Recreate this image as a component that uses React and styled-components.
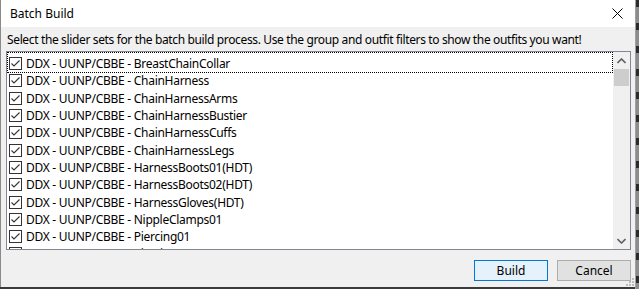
import React from "react";
import styled, { createGlobalStyle } from "styled-components";

const Global = createGlobalStyle`
  html, body {
    margin: 0;
    padding: 0;
    background: #3a3a3a;
  }
  body {
    font-family: "Noto Sans", "Liberation Sans", sans-serif;
    font-size: 12px;
    color: #000;
  }
`;

const items = [
  "BreastChainCollar",
  "ChainHarness",
  "ChainHarnessArms",
  "ChainHarnessBustier",
  "ChainHarnessCuffs",
  "ChainHarnessLegs",
  "HarnessBoots01(HDT)",
  "HarnessBoots02(HDT)",
  "HarnessGloves(HDT)",
  "NippleClamps01",
  "Piercing01",
  "Piercing02",
  "Piercing03",
];

const Screen = styled.div`
  display: flex;
  width: 639px;
  height: 289px;
  overflow: hidden;
`;

const Window = styled.div`
  width: 635px;
  height: 287px;
  display: flex;
  flex-direction: column;
  background: #f0f0f0;
  border-left: 1px solid #8a8a8a;
  box-sizing: border-box;
`;

const Backdrop = styled.div`
  width: 4px;
  height: 289px;
  border-left: 1px solid #a0a0a0;
  background: repeating-linear-gradient(
    to bottom,
    #2c2c2c 0px,
    #2c2c2c 7px,
    #8c8c8c 7px,
    #8c8c8c 23px
  );
`;

const TitleBar = styled.div`
  height: 27px;
  flex: none;
  background: #fff;
  display: flex;
  align-items: center;
  justify-content: space-between;
  padding-left: 9px;
`;

const Title = styled.span`
  font-size: 12px;
`;

const CloseButton = styled.div`
  width: 30px;
  height: 27px;
  display: flex;
  align-items: center;
  justify-content: center;
  margin-right: 3px;
`;

const Body = styled.div`
  flex: 1;
  display: flex;
  flex-direction: column;
  padding: 6px 4px 0 5px;
  position: relative;
`;

const Hint = styled.div`
  height: 14px;
  line-height: 14px;
  padding-left: 1px;
  margin-bottom: 4px;
  white-space: nowrap;
  letter-spacing: -0.36px;
`;

const ListBox = styled.div`
  height: 199px;
  width: 625px;
  box-sizing: border-box;
  border: 1px solid #828790;
  background: #fff;
  display: flex;
`;

const Rows = styled.div`
  flex: 1;
  padding-top: 3px;
  overflow: hidden;
`;

const Row = styled.div`
  height: 17.3px;
  display: flex;
  align-items: center;
  padding-left: 2px;
  position: relative;
  white-space: nowrap;

  &::before {
    content: "";
    display: ${(p) => (p.$focused ? "block" : "none")};
    position: absolute;
    left: 0;
    right: 0;
    top: -3px;
    bottom: -1px;
    border: 1px dotted #000;
  }
`;

const Box = styled.span`
  width: 13px;
  height: 13px;
  box-sizing: border-box;
  border: 1px solid #333;
  background: #fff;
  margin-right: 4px;
  display: flex;
  align-items: center;
  justify-content: center;
  flex: none;
`;

const Label = styled.span`
  letter-spacing: -0.28px;
`;

const ScrollBar = styled.div`
  width: 17px;
  background: #f0f0f0;
  display: flex;
  flex-direction: column;
`;

const Arrow = styled.div`
  height: 17px;
  display: flex;
  align-items: center;
  justify-content: center;
`;

const Track = styled.div`
  flex: 1;
  padding: 0 1px;
`;

const Thumb = styled.div`
  height: 17px;
  background: #cdcdcd;
`;

const Footer = styled.div`
  flex: 1;
  display: flex;
  justify-content: flex-end;
  align-items: flex-start;
  gap: 9px;
  padding-top: 10px;
`;

const Button = styled.div`
  width: 74px;
  height: 21px;
  box-sizing: border-box;
  display: flex;
  align-items: center;
  justify-content: center;
  border: 1px solid ${(p) => (p.$primary ? "#0078d7" : "#adadad")};
  background: ${(p) => (p.$primary ? "#e5f1fb" : "#e1e1e1")};
`;

const Grip = styled.svg`
  position: absolute;
  right: 1px;
  bottom: 1px;
`;

const Check = () => (
  <svg width="11" height="11" viewBox="0 0 11 11">
    <path d="M1.5 5.5 L4 8 L9.5 2.5" fill="none" stroke="#333" strokeWidth="1.1" />
  </svg>
);

export default function App() {
  return (
    <>
      <Global />
      <Screen>
        <Window>
          <TitleBar>
            <Title>Batch Build</Title>
            <CloseButton>
              <svg width="11" height="11" viewBox="0 0 11 11">
                <path d="M0.5 0.5 L10.5 10.5 M10.5 0.5 L0.5 10.5" stroke="#000" strokeWidth="1" />
              </svg>
            </CloseButton>
          </TitleBar>
          <Body>
            <Hint>
              Select the slider sets for the batch build process. Use the group and outfit filters to show the outfits you want!
            </Hint>
            <ListBox>
              <Rows>
                {items.map((name, i) => (
                  <Row key={name} $focused={i === 0}>
                    <Box>
                      <Check />
                    </Box>
                    <Label>DDX - UUNP/CBBE - {name}</Label>
                  </Row>
                ))}
              </Rows>
              <ScrollBar>
                <Arrow>
                  <svg width="9" height="6" viewBox="0 0 9 6">
                    <path d="M0.5 5 L4.5 1 L8.5 5" fill="none" stroke="#606060" strokeWidth="1.6" />
                  </svg>
                </Arrow>
                <Track>
                  <Thumb />
                </Track>
                <Arrow>
                  <svg width="9" height="6" viewBox="0 0 9 6">
                    <path d="M0.5 1 L4.5 5 L8.5 1" fill="none" stroke="#606060" strokeWidth="1.6" />
                  </svg>
                </Arrow>
              </ScrollBar>
            </ListBox>
            <Footer>
              <Button $primary>Build</Button>
              <Button>Cancel</Button>
            </Footer>
            <Grip width="8" height="8" viewBox="0 0 8 8">
              {[[6, 0], [6, 3], [3, 3], [6, 6], [3, 6], [0, 6]].map(([x, y]) => (
                <rect key={`${x}-${y}`} x={x} y={y} width="2" height="2" fill="#bcbcbc" />
              ))}
            </Grip>
          </Body>
        </Window>
        <Backdrop />
      </Screen>
    </>
  );
}
